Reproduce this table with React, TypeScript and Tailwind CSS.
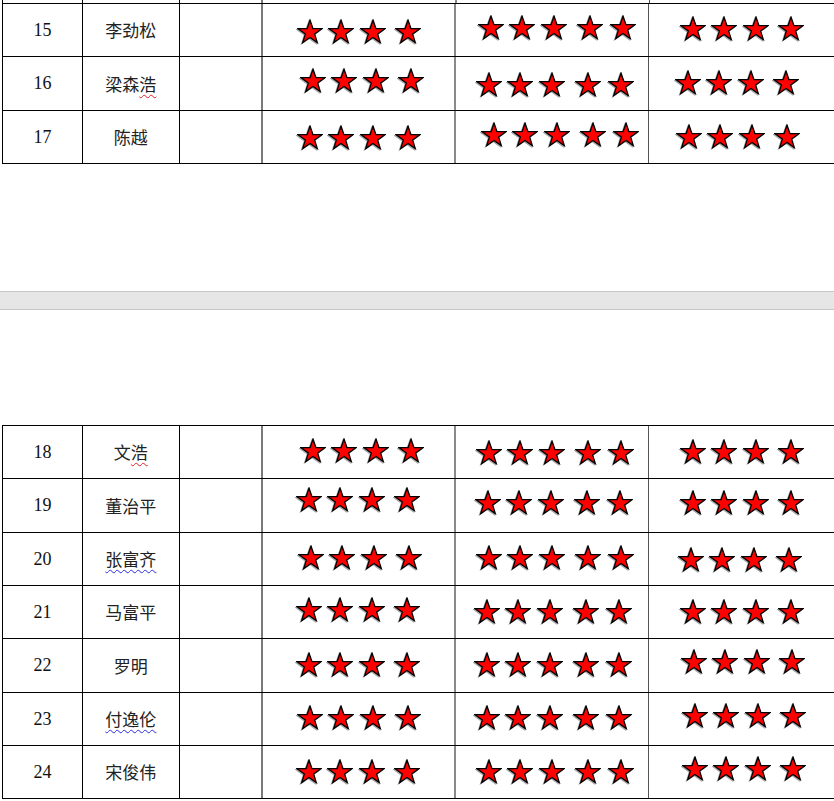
import React from 'react';

// one table row: number, name, optional wavy underline, star cell nudges
interface Row {
  no: number;
  name: string;
  mark?: 'red-last' | 'blue';
  h: string;
  c3: string;
  c4: string;
  c5: string;
}

const firstRows: Row[] = [
  { no: 15, name: '李劲松', h: 'h-[52px]', c3: 'translate-y-[1px]', c4: 'translate-x-[5px] -translate-y-[3px]', c5: '-translate-y-[2px]' },
  { no: 16, name: '梁森浩', mark: 'red-last', h: 'h-[53px]', c3: 'translate-x-[3px] -translate-y-[3px]', c4: 'translate-x-[3px] translate-y-[1px]', c5: '-translate-x-[5px] -translate-y-[1px]' },
  { no: 17, name: '陈越', h: 'h-[52px]', c3: '', c4: 'translate-x-[8px] -translate-y-[3px]', c5: '-translate-x-[4px] -translate-y-[1px]' },
];

const secondRows: Row[] = [
  { no: 18, name: '文浩', mark: 'red-last', h: 'h-[52px]', c3: 'translate-x-[3px] -translate-y-[2px]', c4: 'translate-x-[3px]', c5: '-translate-y-[1px]' },
  { no: 19, name: '董治平', h: 'h-[53px]', c3: '-translate-x-[1px] -translate-y-[6px]', c4: 'translate-x-[2px] -translate-y-[3px]', c5: '-translate-y-[3px]' },
  { no: 20, name: '张富齐', mark: 'blue', h: 'h-[52px]', c3: 'translate-x-[1px] -translate-y-[2px]', c4: 'translate-x-[3px] -translate-y-[2px]', c5: '-translate-x-[2px]' },
  { no: 21, name: '马富平', h: 'h-[52px]', c3: '-translate-x-[1px] -translate-y-[3px]', c4: 'translate-x-[1px] -translate-y-[1px]', c5: '-translate-y-[1px]' },
  { no: 22, name: '罗明', h: 'h-[53px]', c3: '-translate-x-[1px] -translate-y-[1px]', c4: 'translate-x-[1px] -translate-y-[1px]', c5: 'translate-x-[1px] -translate-y-[4px]' },
  { no: 23, name: '付逸伦', mark: 'blue', h: 'h-[52px]', c3: '-translate-y-[2px]', c4: 'translate-x-[1px] -translate-y-[2px]', c5: 'translate-x-[2px] -translate-y-[4px]' },
  { no: 24, name: '宋俊伟', h: 'h-[52px]', c3: '-translate-x-[1px] -translate-y-[1px]', c4: 'translate-x-[3px] -translate-y-[1px]', c5: 'translate-x-[2px] -translate-y-[4px]' },
];

const Star: React.FC<{ className?: string }> = ({ className = '' }) => (
  <svg
    viewBox="0 0 100 96"
    className={`w-[26px] h-[25px] shrink-0 drop-shadow-[-1px_1px_0.5px_rgba(0,0,0,0.35)] ${className}`}
  >
    <polygon
      points="50,4 61.2,36.6 95.6,37.2 68.1,57.9 78.2,90.8 50,71 21.8,90.8 31.9,57.9 4.4,37.2 38.8,36.6"
      fill="#ff0000"
      stroke="#000"
      strokeWidth="5"
      strokeLinejoin="miter"
    />
  </svg>
);

const StarsFour: React.FC<{ shift: string }> = ({ shift }) => (
  <div className={`flex items-center ${shift}`}>
    <Star />
    <Star className="ml-[5px]" />
    <Star className="ml-[6px]" />
    <Star className="ml-[9px]" />
  </div>
);

const StarsFive: React.FC<{ shift: string }> = ({ shift }) => (
  <div className={`flex items-center ${shift}`}>
    <Star />
    <Star className="ml-[5px]" />
    <Star className="ml-[6px]" />
    <Star className="ml-[10px]" />
    <Star className="ml-[7px]" />
  </div>
);

const Name: React.FC<{ row: Row }> = ({ row }) => {
  if (row.mark === 'blue') {
    return (
      <span className="underline decoration-wavy decoration-[#2b2bdc] decoration-1 underline-offset-[3px]">
        {row.name}
      </span>
    );
  }
  if (row.mark === 'red-last') {
    return (
      <span>
        {row.name.slice(0, -1)}
        <span className="underline decoration-wavy decoration-[#e02020] decoration-1 underline-offset-[3px]">
          {row.name.slice(-1)}
        </span>
      </span>
    );
  }
  return <span>{row.name}</span>;
};

const TableRow: React.FC<{ row: Row }> = ({ row }) => (
  <div className={`flex border-b border-black box-content ${row.h}`}>
    <div className="w-[80px] border-r border-black flex items-center justify-center font-['Liberation_Serif',serif] text-[18px] text-[#111]">
      {row.no}
    </div>
    <div className="w-[97px] border-r border-black flex items-center justify-center font-['Noto_Sans_CJK_SC',sans-serif] text-[17px] text-[#222]">
      <Name row={row} />
    </div>
    <div className="w-[83px] border-r-2 border-[#7a7a7a]" />
    <div className="w-[194px] border-r-2 border-[#8a8a8a] flex items-center justify-center">
      <StarsFour shift={row.c3} />
    </div>
    <div className="w-[193px] border-r border-[#555] flex items-center justify-center">
      <StarsFive shift={row.c4} />
    </div>
    <div className="w-[185px] flex items-center justify-center">
      <StarsFour shift={row.c5} />
    </div>
  </div>
);

const App: React.FC = () => {
  return (
    <div className="bg-white w-[834px] h-[801px] overflow-hidden">
      {/* tail of table from the previous page */}
      <div className="ml-[2px] border-l border-black">
        <div className="flex h-[3px]">
          <div className="w-[80px] border-r border-black" />
          <div className="w-[97px] border-r border-black" />
          <div className="w-[83px] border-r-2 border-[#7a7a7a]" />
          <div className="w-[194px] border-r-2 border-[#8a8a8a]" />
          <div className="w-[193px] border-r border-[#555]" />
        </div>
        <div className="border-t border-black">
          {firstRows.map((r) => (
            <TableRow key={r.no} row={r} />
          ))}
        </div>
      </div>

      {/* page break */}
      <div className="mt-[127px] h-[19px] bg-[#e6e6e6] border-y border-[#c6c6c6]" />

      <div className="mt-[115px] ml-[2px] border-l border-t border-black">
        {secondRows.map((r) => (
          <TableRow key={r.no} row={r} />
        ))}
      </div>
    </div>
  );
};

export default App;
